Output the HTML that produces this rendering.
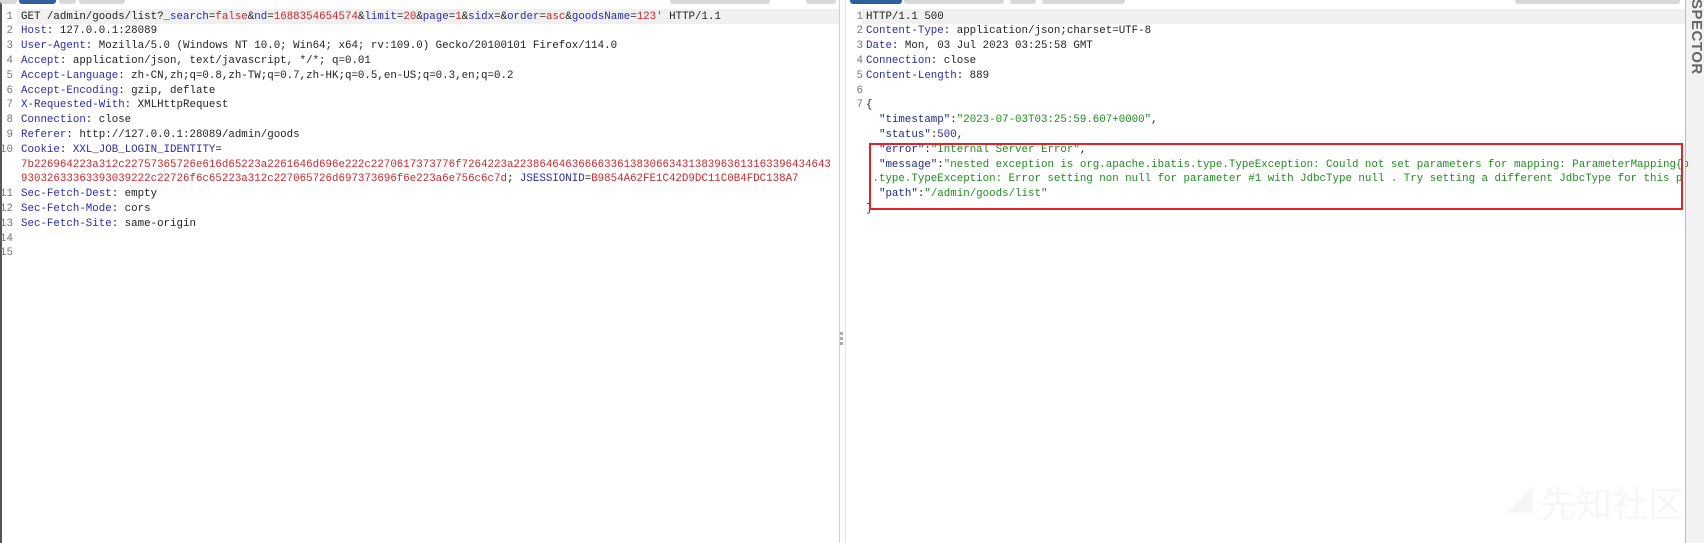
<!DOCTYPE html>
<html><head><meta charset="utf-8"><style>
html,body{margin:0;padding:0;width:1704px;height:543px;overflow:hidden;background:#fff;position:relative}
.t{position:absolute;height:4px;top:0;background:#d8d8d8;border-radius:0 0 3px 3px}
.b{background:#2f5f9e}
.hl{position:absolute;height:15px;top:9px;background:#f0f0f0}
.r{position:absolute;white-space:pre;font-family:"Liberation Mono",monospace;font-size:10.8px;line-height:14.8px;color:#222;height:15px}
.n{position:absolute;white-space:pre;font-family:"Liberation Mono",monospace;font-size:10.8px;line-height:14.8px;color:#777;text-align:right;width:13px}
.k{color:#2b2ba8}.v{color:#c8282e}.g{color:#1e8c1e}.q{color:#1c2a7a}
</style></head><body>
<div style="position:absolute;left:0;top:0;width:2px;height:543px;background:#555"></div>
<div class="t" style="left:0;width:17px"></div><div class="t b" style="left:19px;width:37px"></div><div class="t" style="left:59px;width:17px"></div><div class="t" style="left:79px;width:46px"></div>
<div class="t" style="left:670px;width:100px"></div><div class="t" style="left:806px;width:30px"></div>
<div class="t b" style="left:850px;width:52px"></div><div class="t" style="left:904px;width:100px"></div><div class="t" style="left:1010px;width:26px"></div><div class="t" style="left:1042px;width:83px"></div><div class="t" style="left:1515px;width:165px"></div>
<div class="hl" style="left:17px;width:822px"></div>
<div class="hl" style="left:862px;width:823px"></div>
<div style="position:absolute;left:839px;top:0;width:1px;height:543px;background:#d0d0d0"></div>
<div style="position:absolute;left:845px;top:0;width:1px;height:543px;background:#e4e4e4"></div>
<div style="position:absolute;left:840px;top:332px;width:3px;height:3px;background:#aaa;box-shadow:0 5px 0 #aaa,0 10px 0 #aaa"></div>
<div style="position:absolute;left:1685px;top:0;width:19px;height:543px;background:#f2f2f2;border-left:1px solid #bbb"></div>
<div style="position:absolute;left:1686px;top:0;width:18px;height:80px;overflow:hidden"><div style="position:absolute;left:2px;top:-34px;transform:rotate(90deg);transform-origin:left bottom;font:bold 15px 'Liberation Sans',sans-serif;color:#666;white-space:nowrap;letter-spacing:0.5px">INSPECTOR</div></div>
<div style="position:absolute;left:1508px;top:478px;width:40px;height:36px;color:#f6f6f6;font:bold 32px 'Liberation Sans',sans-serif">◢</div>
<div style="position:absolute;left:1540px;top:476px;font:36px 'Noto Sans CJK SC',sans-serif;color:#f6f6f6;white-space:nowrap">先知社区</div>

<div class="n" style="left:0;top:9.6px">1</div><div class="r" style="left:21px;top:9.6px">GET /admin/goods/list?<span class="k">_search</span>=<span class="v">false</span>&amp;<span class="k">nd</span>=<span class="v">1688354654574</span>&amp;<span class="k">limit</span>=<span class="v">20</span>&amp;<span class="k">page</span>=<span class="v">1</span>&amp;<span class="k">sidx</span>=&amp;<span class="k">order</span>=<span class="v">asc</span>&amp;<span class="k">goodsName</span>=<span class="v">123'</span> HTTP/1.1</div>
<div class="n" style="left:0;top:24.4px">2</div><div class="r" style="left:21px;top:24.4px"><span class="k">Host</span>: 127.0.0.1:28089</div>
<div class="n" style="left:0;top:39.2px">3</div><div class="r" style="left:21px;top:39.2px"><span class="k">User-Agent</span>: Mozilla/5.0 (Windows NT 10.0; Win64; x64; rv:109.0) Gecko/20100101 Firefox/114.0</div>
<div class="n" style="left:0;top:54px">4</div><div class="r" style="left:21px;top:54px"><span class="k">Accept</span>: application/json, text/javascript, */*; q=0.01</div>
<div class="n" style="left:0;top:68.8px">5</div><div class="r" style="left:21px;top:68.8px"><span class="k">Accept-Language</span>: zh-CN,zh;q=0.8,zh-TW;q=0.7,zh-HK;q=0.5,en-US;q=0.3,en;q=0.2</div>
<div class="n" style="left:0;top:83.6px">6</div><div class="r" style="left:21px;top:83.6px"><span class="k">Accept-Encoding</span>: gzip, deflate</div>
<div class="n" style="left:0;top:98.4px">7</div><div class="r" style="left:21px;top:98.4px"><span class="k">X-Requested-With</span>: XMLHttpRequest</div>
<div class="n" style="left:0;top:113.2px">8</div><div class="r" style="left:21px;top:113.2px"><span class="k">Connection</span>: close</div>
<div class="n" style="left:0;top:128px">9</div><div class="r" style="left:21px;top:128px"><span class="k">Referer</span>: http://127.0.0.1:28089/admin/goods</div>
<div class="n" style="left:0;top:142.8px">10</div><div class="r" style="left:21px;top:142.8px"><span class="k">Cookie</span>: <span class="k">XXL_JOB_LOGIN_IDENTITY</span>=</div>
<div class="r v" style="left:21px;top:157.6px">7b226964223a312c22757365726e616d65223a2261646d696e222c2270617373776f7264223a2238646463666633613830663431383963613163396434643</div>
<div class="r" style="left:21px;top:172.4px"><span class="v">93032633363393039222c22726f6c65223a312c227065726d697373696f6e223a6e756c6c7d</span>; <span class="k">JSESSIONID</span>=<span class="v">B9854A62FE1C42D9DC11C0B4FDC138A7</span></div>
<div class="n" style="left:0;top:187.2px">11</div><div class="r" style="left:21px;top:187.2px"><span class="k">Sec-Fetch-Dest</span>: empty</div>
<div class="n" style="left:0;top:202px">12</div><div class="r" style="left:21px;top:202px"><span class="k">Sec-Fetch-Mode</span>: cors</div>
<div class="n" style="left:0;top:216.8px">13</div><div class="r" style="left:21px;top:216.8px"><span class="k">Sec-Fetch-Site</span>: same-origin</div>
<div class="n" style="left:0;top:231.6px">14</div>
<div class="n" style="left:0;top:246.4px">15</div>

<div class="n" style="left:850px;top:9.6px">1</div><div class="r" style="left:866px;top:9.6px">HTTP/1.1 500</div>
<div class="n" style="left:850px;top:24.4px">2</div><div class="r" style="left:866px;top:24.4px"><span class="k">Content-Type</span>: application/json;charset=UTF-8</div>
<div class="n" style="left:850px;top:39.2px">3</div><div class="r" style="left:866px;top:39.2px"><span class="k">Date</span>: Mon, 03 Jul 2023 03:25:58 GMT</div>
<div class="n" style="left:850px;top:54px">4</div><div class="r" style="left:866px;top:54px"><span class="k">Connection</span>: close</div>
<div class="n" style="left:850px;top:68.8px">5</div><div class="r" style="left:866px;top:68.8px"><span class="k">Content-Length</span>: 889</div>
<div class="n" style="left:850px;top:83.6px">6</div>
<div class="n" style="left:850px;top:98.4px">7</div><div class="r" style="left:866px;top:98.4px">{</div>
<div class="r" style="left:866px;top:113.2px">  <span class="q">"timestamp"</span>:<span class="g">"2023-07-03T03:25:59.607+0000"</span>,</div>
<div class="r" style="left:866px;top:128px">  <span class="q">"status"</span>:<span class="k">500</span>,</div>
<div class="r" style="left:866px;top:142.8px">  <span class="q">"error"</span>:<span class="g">"Internal Server Error"</span>,</div>
<div class="r" style="left:866px;top:157.6px">  <span class="q">"message"</span>:<span class="g">"nested exception is org.apache.ibatis.type.TypeException: Could not set parameters for mapping: ParameterMapping{p</span></div>
<div class="r g" style="left:866px;top:172.4px"> .type.TypeException: Error setting non null for parameter #1 with JdbcType null . Try setting a different JdbcType for this p</div>
<div class="r" style="left:866px;top:187.2px">  <span class="q">"path"</span>:<span class="g">"/admin/goods/list"</span></div>
<div class="r" style="left:866px;top:202px">}</div>
<div style="position:absolute;left:1682px;top:150px;width:3px;height:60px;background:#fff"></div>
<div style="position:absolute;left:869px;top:143px;width:810px;height:63px;border:2px solid #e3232b"></div>
</body></html>
